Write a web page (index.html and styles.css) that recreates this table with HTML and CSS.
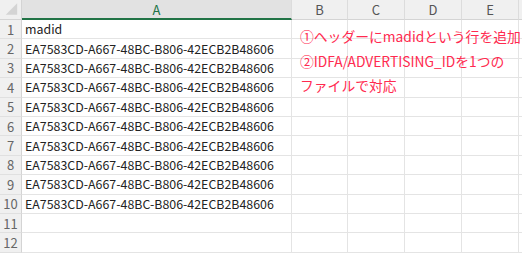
FILE: index.html
```html
<!DOCTYPE html>
<html>
<head>
<meta charset="utf-8">
<link rel="stylesheet" href="styles.css">
</head>
<body>
<div class="sheet">
  <div class="grid">
    <div class="corner"><svg width="22" height="20" viewBox="0 0 22 20"><polygon points="18,4 18,16 6,16" fill="#d4d4d4"/></svg></div>
    <div class="colh sel">A</div>
    <div class="colh">B</div>
    <div class="colh">C</div>
    <div class="colh">D</div>
    <div class="colh">E</div>
    <div class="colh last"></div>

    <div class="rowh">1</div><div class="cell">madid</div><div class="cell"></div><div class="cell"></div><div class="cell"></div><div class="cell"></div><div class="cell last"></div>
    <div class="rowh">2</div><div class="cell">EA7583CD-A667-48BC-B806-42ECB2B48606</div><div class="cell"></div><div class="cell"></div><div class="cell"></div><div class="cell"></div><div class="cell last"></div>
    <div class="rowh">3</div><div class="cell">EA7583CD-A667-48BC-B806-42ECB2B48606</div><div class="cell"></div><div class="cell"></div><div class="cell"></div><div class="cell"></div><div class="cell last"></div>
    <div class="rowh">4</div><div class="cell">EA7583CD-A667-48BC-B806-42ECB2B48606</div><div class="cell"></div><div class="cell"></div><div class="cell"></div><div class="cell"></div><div class="cell last"></div>
    <div class="rowh">5</div><div class="cell">EA7583CD-A667-48BC-B806-42ECB2B48606</div><div class="cell"></div><div class="cell"></div><div class="cell"></div><div class="cell"></div><div class="cell last"></div>
    <div class="rowh">6</div><div class="cell">EA7583CD-A667-48BC-B806-42ECB2B48606</div><div class="cell"></div><div class="cell"></div><div class="cell"></div><div class="cell"></div><div class="cell last"></div>
    <div class="rowh">7</div><div class="cell">EA7583CD-A667-48BC-B806-42ECB2B48606</div><div class="cell"></div><div class="cell"></div><div class="cell"></div><div class="cell"></div><div class="cell last"></div>
    <div class="rowh">8</div><div class="cell">EA7583CD-A667-48BC-B806-42ECB2B48606</div><div class="cell"></div><div class="cell"></div><div class="cell"></div><div class="cell"></div><div class="cell last"></div>
    <div class="rowh">9</div><div class="cell">EA7583CD-A667-48BC-B806-42ECB2B48606</div><div class="cell"></div><div class="cell"></div><div class="cell"></div><div class="cell"></div><div class="cell last"></div>
    <div class="rowh">10</div><div class="cell">EA7583CD-A667-48BC-B806-42ECB2B48606</div><div class="cell"></div><div class="cell"></div><div class="cell"></div><div class="cell"></div><div class="cell last"></div>
    <div class="rowh">11</div><div class="cell"></div><div class="cell"></div><div class="cell"></div><div class="cell"></div><div class="cell"></div><div class="cell last"></div>
    <div class="rowh">12</div><div class="cell"></div><div class="cell"></div><div class="cell"></div><div class="cell"></div><div class="cell"></div><div class="cell last"></div>
  </div>
  <div class="note">
    <p>①ヘッダーにmadidという行を追加</p>
    <p>②IDFA/ADVERTISING_IDを1つの</p>
    <p>ファイルで対応</p>
  </div>
</div>
</body>
</html>
```

FILE: styles.css
```css
html, body {
  margin: 0;
  padding: 0;
  background: #ffffff;
}
.sheet {
  position: relative;
  width: 522px;
  height: 253px;
  overflow: hidden;
  font-family: "Noto Sans CJK JP", "Noto Sans", sans-serif;
}
.grid {
  display: grid;
  grid-template-columns: 22px 270px 56px 57px 57px 57px 3px;
  grid-template-rows: 20px repeat(12, 19.4px);
}
.corner {
  background: #f0f0f0;
  border-right: 1px solid #d4d4d4;
  border-bottom: 1px solid #d4d4d4;
  box-sizing: border-box;
  display: flex;
  align-items: flex-end;
  justify-content: flex-end;
}
.corner svg {
  display: block;
}
.colh {
  background: #f0f0f0;
  border-right: 1px solid #dcdcdc;
  border-bottom: 1px solid #d4d4d4;
  box-sizing: border-box;
  color: #555555;
  font-size: 13px;
  display: flex;
  align-items: center;
  justify-content: center;
}
.colh.sel {
  background: #e2e2e2;
  color: #217346;
  border-bottom: 2px solid #217346;
}
.rowh {
  background: #f0f0f0;
  border-right: 1px solid #d4d4d4;
  border-bottom: 1px solid #e0e0e0;
  box-sizing: border-box;
  color: #666666;
  font-size: 13px;
  display: flex;
  align-items: center;
  justify-content: center;
}
.cell {
  border-right: 1px solid #e4e4e4;
  border-bottom: 1px solid #e4e4e4;
  box-sizing: border-box;
  color: #222222;
  font-size: 12.4px;
  line-height: 18px;
  padding-left: 3px;
  white-space: nowrap;
  overflow: visible;
  display: flex;
  align-items: center;
}
.last {
  border-right: none;
}
.note {
  position: absolute;
  left: 300px;
  top: 24px;
  color: #ff2a4f;
  font-size: 13.8px;
  line-height: 24.5px;
}
.note p {
  margin: 0;
  white-space: nowrap;
}
```
